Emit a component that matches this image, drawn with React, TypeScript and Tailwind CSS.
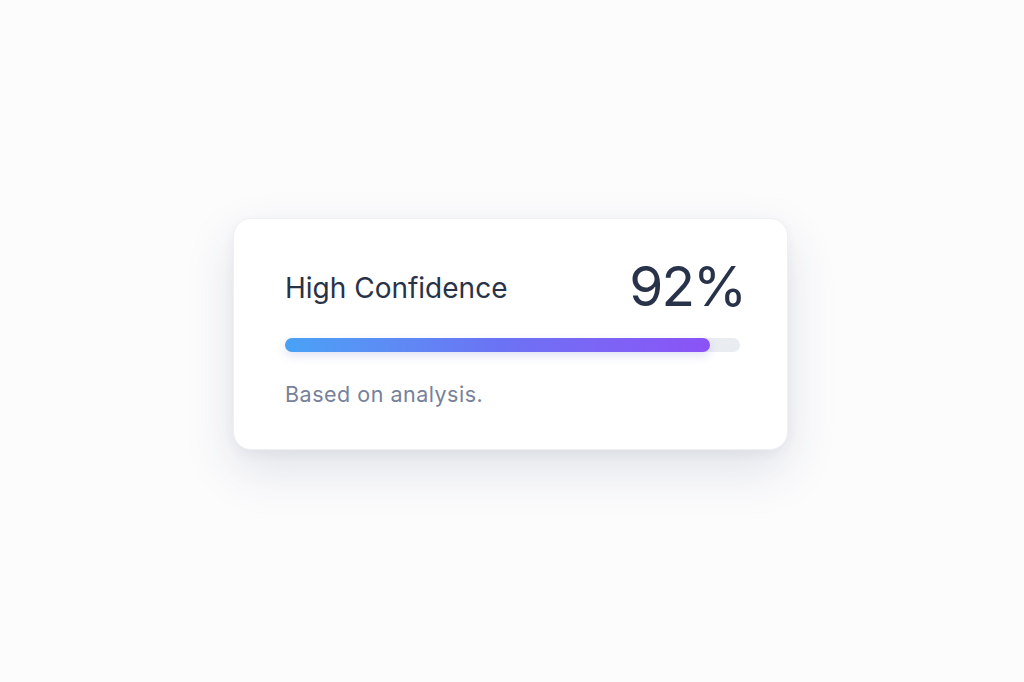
export default function App() {
  return (
    <div
      className="w-[1024px] h-[682px] bg-[#fcfcfd] pt-[218px] pl-[233px]"
      style={{ fontFamily: 'Inter, "Noto Sans", sans-serif' }}
    >
      <div className="w-[555px] h-[232px] rounded-[18px] bg-white border border-[#eef0f4] shadow-[0_20px_50px_rgba(40,52,90,0.13),0_4px_12px_rgba(40,52,90,0.05)] pl-[51px] pr-[47px] pt-[40px]">
        <div className="flex items-start justify-between">
          <div className="mt-[15px] text-[28px] leading-none text-[#283249]">
            High Confidence
          </div>
          <div className="mr-[-5px] text-[55px] leading-none text-[#283249] tracking-[-2px]">
            92%
          </div>
        </div>
        <div className="mt-[24px] h-[14px] w-full rounded-full bg-[#e9ecf1]">
          <div className="h-full w-[93.4%] rounded-full bg-gradient-to-r from-[#48a2f5] via-[#6a73f4] to-[#8b52f6] shadow-[0_4px_10px_rgba(90,100,200,0.18)]" />
        </div>
        <div className="mt-[32px] text-[21.5px] leading-none text-[#76819a] tracking-[0.5px]">
          Based on analysis.
        </div>
      </div>
    </div>
  );
}
